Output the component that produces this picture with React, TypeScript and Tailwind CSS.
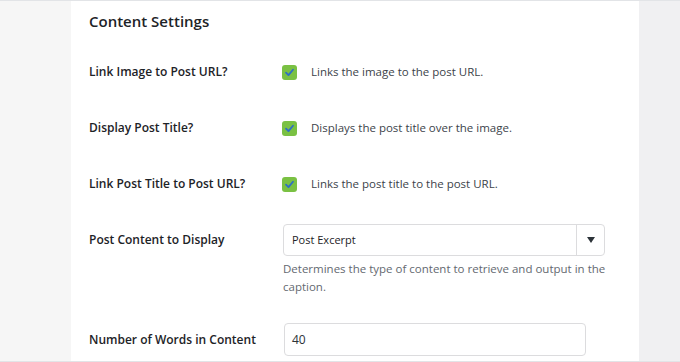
import React from "react";

function Check() {
  return (
    <span className="flex h-[15px] w-[15px] shrink-0 items-center justify-center rounded-[3px] bg-[#7ac143]">
      <svg width="11" height="11" viewBox="0 0 12 12" fill="none">
        <path d="M2.2 6.2 L4.9 8.8 L9.8 3" stroke="#2f6fc4" strokeWidth="2" strokeLinecap="round" strokeLinejoin="round" />
      </svg>
    </span>
  );
}

function CheckRow({ label, desc, mt }: { label: string; desc: string; mt: string }) {
  return (
    <div className={`flex h-[20px] items-center ${mt}`}>
      <div className="w-[193px] shrink-0 text-[12px] font-semibold text-[#1d2327]">{label}</div>
      <Check />
      <div className="ml-[14px] text-[11.5px] text-[#3c434a]">{desc}</div>
    </div>
  );
}

export default function App() {
  return (
    <div
      className="flex h-[362px] w-[680px] border-y border-[#e2e4e7] bg-white"
      style={{ fontFamily: '"Open Sans", "Noto Sans", sans-serif' }}
    >
      <div className="w-[71px] shrink-0 bg-[#f6f6f6]" />
      <div className="w-[568px] shrink-0 bg-white pl-[18px]">
        <div className="mt-[8px] h-[24px] text-[15px] font-semibold leading-[24px] text-[#1d2327]">Content Settings</div>
        <CheckRow mt="mt-[29px]" label="Link Image to Post URL?" desc="Links the image to the post URL." />
        <CheckRow mt="mt-[36px]" label="Display Post Title?" desc="Displays the post title over the image." />
        <CheckRow mt="mt-[36px]" label="Link Post Title to Post URL?" desc="Links the post title to the post URL." />
        <div className="mt-[30px] flex">
          <div className="w-[194px] shrink-0 pt-[6px] text-[12px] font-semibold leading-[20px] text-[#1d2327]">Post Content to Display</div>
          <div className="w-[323px]">
            <div className="flex h-[32px] w-[322px] items-stretch rounded-[4px] border border-[#dcdcde] bg-white">
              <div className="flex flex-1 items-center pl-[8px] text-[11px] font-medium text-[#1d2327]">Post Excerpt</div>
              <div className="flex w-[28px] items-center justify-center border-l border-[#dcdcde]">
                <svg width="8" height="6" viewBox="0 0 8 6"><path d="M0 0 H8 L4 6 Z" fill="#2c3338" /></svg>
              </div>
            </div>
            <div className="mt-[4px] text-[11.5px] leading-[18px] text-[#646970]">
              Determines the type of content to retrieve and output in the caption.
            </div>
          </div>
        </div>
        <div className="mt-[27px] flex items-center">
          <div className="w-[195px] shrink-0 text-[12px] font-semibold text-[#1d2327]">Number of Words in Content</div>
          <div className="flex h-[33px] w-[302px] items-center rounded-[4px] border border-[#dcdcde] pl-[7px] text-[12px] text-[#2c3338]">40</div>
        </div>
      </div>
      <div className="flex-1 bg-[#f0f0f2]" />
    </div>
  );
}
